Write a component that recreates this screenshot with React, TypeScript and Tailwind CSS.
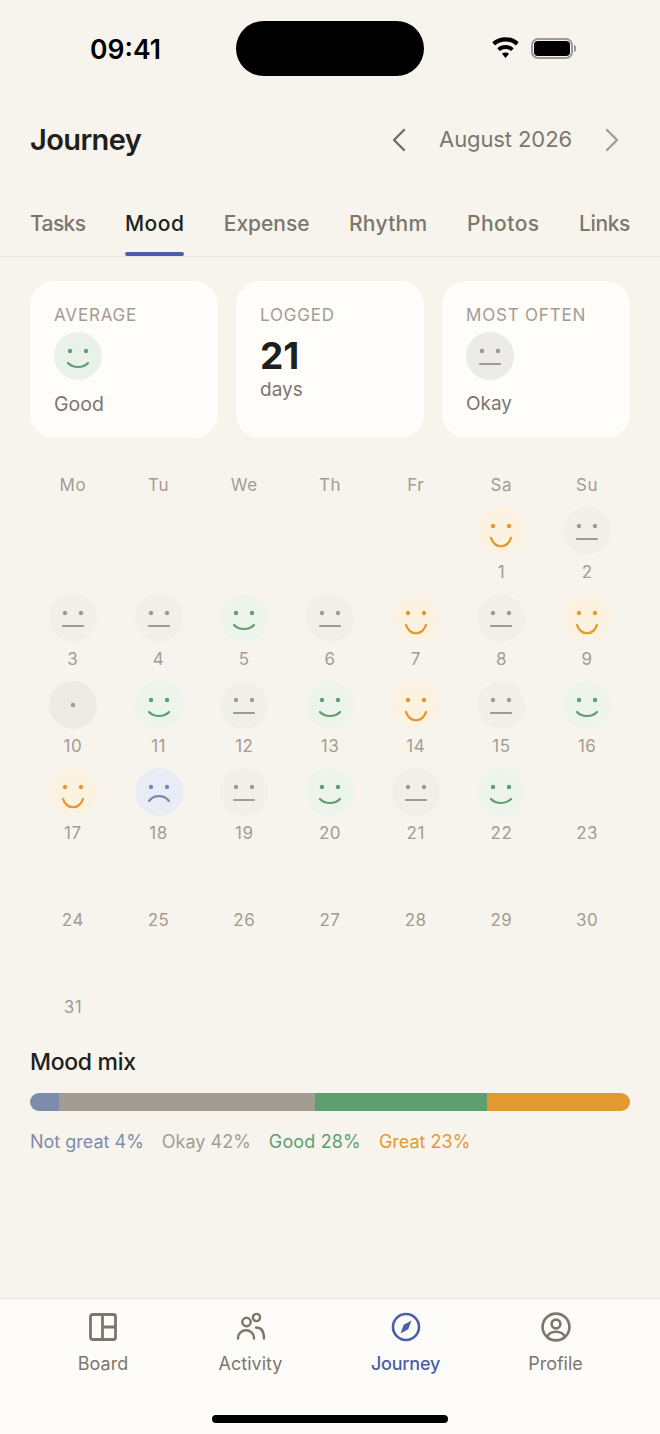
import { ChevronLeft, ChevronRight } from "lucide-react";

type Mood = "great" | "good" | "okay" | "low" | "none" | "dot";

const faceStyles = {
  great: { bg: "bg-[#fcf2e2]", color: "#e29a2f" },
  good: { bg: "bg-[#edf4ec]", color: "#5f9e6e" },
  okay: { bg: "bg-[#f1efea]", color: "#a19a90" },
  low: { bg: "bg-[#e8ecf4]", color: "#7a8aaa" },
  dot: { bg: "bg-[#ecebe6]", color: "#a19a90" },
};

// day -> mood, in calendar order (August starts on Saturday)
const moods: Mood[] = [
  "great", "okay", "okay", "okay", "good", "okay", "great", "okay", "great",
  "dot", "good", "okay", "good", "great", "okay", "good",
  "great", "low", "okay", "good", "okay", "good",
];

// tracking per tab keeps each label at the width it has in the design
const tabs = [
  { label: "Tasks", track: "tracking-[-0.6px]" },
  { label: "Mood", track: "tracking-[0.5px]" },
  { label: "Expense", track: "tracking-[-0.05px]" },
  { label: "Rhythm", track: "tracking-[0.3px]" },
  { label: "Photos", track: "tracking-[0.5px]" },
  { label: "Links", track: "tracking-[-0.4px]" },
];

function Face({ mood, bg }: { mood: Exclude<Mood, "none">; bg?: string }) {
  const s = faceStyles[mood];
  return (
    <div className={`w-12 h-12 rounded-full ${bg ?? s.bg}`}>
      <svg viewBox="0 0 48 48" className="w-12 h-12" fill="none" stroke={s.color} strokeWidth="2.2" strokeLinecap="round">
        {mood === "dot" ? (
          <circle cx="24" cy="24" r="2.2" fill={s.color} stroke="none" />
        ) : (
          <>
            <circle cx="16" cy="19" r="2.2" fill={s.color} stroke="none" />
            <circle cx="32" cy="19" r="2.2" fill={s.color} stroke="none" />
          </>
        )}
        {mood === "great" && <path d="M14 31c4 11 16 11 20 0" />}
        {mood === "good" && <path d="M14 31c5 5.3 15 5.3 20 0" />}
        {mood === "okay" && <path d="M14 32h20" />}
        {mood === "low" && <path d="M14 33c5-6.5 15-6.5 20 0" />}
      </svg>
    </div>
  );
}

function DayCell({ day, mood }: { day: number; mood: Mood }) {
  return (
    <div className="h-[87px] flex flex-col items-center">
      <div className="h-12 w-12">{mood !== "none" && <Face mood={mood} />}</div>
      <span className="mt-[7px] text-[17px] leading-[20px] tracking-[0.5px] text-[#a39c92]">{day}</span>
    </div>
  );
}

function StatCard({ label, children }: { label: string; children: React.ReactNode }) {
  return (
    <div className="h-[157px] rounded-[24px] bg-[#fefdfa] pl-6 pt-[24px]">
      <div className="text-[17px] leading-[20px] tracking-[0.8px] text-[#a39c92]">{label}</div>
      {children}
    </div>
  );
}

export default function App() {
  const days = Array.from({ length: 31 }, (_, i) => i + 1);

  return (
    <div className="w-[660px] h-[1434px] flex flex-col bg-[#f7f4ee] font-['Inter',sans-serif] overflow-hidden">
      {/* status bar */}
      <div className="relative h-[96px] shrink-0">
        <span className="absolute left-[90px] top-[33px] text-[26.5px] leading-[32px] font-semibold text-black">09:41</span>
        <div className="absolute left-[236px] top-[21px] w-[188px] h-[55px] rounded-full bg-black" />
        <svg viewBox="0 0 30 24" className="absolute left-[491px] top-[37px] w-[29px] h-[22px]" fill="black">
          <path d="M15 23l-3.9-4.6a5.6 5.6 0 017.8 0zM8.8 15.4L6 12.2a13.4 13.4 0 0118 0l-2.8 3.2a9.2 9.2 0 00-12.4 0zM3.6 9.2L.6 5.8a21.4 21.4 0 0128.8 0l-3 3.4a17 17 0 00-22.8 0z" />
        </svg>
        <div className="absolute left-[531px] top-[38px] w-[42px] h-[21px] rounded-[7px] border-2 border-[#9a9a9a] p-[1px]">
          <div className="w-full h-full rounded-[4px] bg-black" />
        </div>
        <div className="absolute left-[574px] top-[45px] w-[2px] h-[7px] rounded-r bg-[#9a9a9a]" />
      </div>

      {/* header */}
      <div className="h-[86px] shrink-0 pt-[1px] px-[30px] flex items-center justify-between">
        <h1 className="text-[29px] leading-[36px] font-semibold tracking-[-0.6px] text-[#211f1b]">Journey</h1>
        <div className="flex items-center -mr-[2px]">
          <ChevronLeft size={40} strokeWidth={1.4} className="text-[#6f6a62]" />
          <span className="mx-[20px] text-[22px] tracking-[-0.1px] text-[#7c766d]">August 2026</span>
          <ChevronRight size={40} strokeWidth={1.4} className="text-[#a39c92]" />
        </div>
      </div>

      {/* tabs */}
      <div className="h-[75px] shrink-0 px-[30px] flex justify-between border-b border-[#e8e5df]">
        {tabs.map((t) => (
          <div key={t.label} className="relative pt-[28px]">
            <span className={`text-[21px] leading-[28px] font-medium ${t.track} ${t.label === "Mood" ? "text-[#211f1b]" : "text-[#7c766d]"}`}>{t.label}</span>
            {t.label === "Mood" && <div className="absolute left-0 right-0 bottom-0 h-[4px] rounded-full bg-[#4a5fa8]" />}
          </div>
        ))}
      </div>

      {/* stats */}
      <div className="mt-[24px] px-[30px] grid grid-cols-3 gap-[18px]">
        <StatCard label="AVERAGE">
          <div className="mt-[7px]"><Face mood="good" bg="bg-[#e9f2ea]" /></div>
          <div className="mt-[11px] text-[19.5px] leading-[26px] text-[#7c766d]">Good</div>
        </StatCard>
        <StatCard label="LOGGED">
          <div className="mt-[11px] text-[37px] leading-[40px] font-bold text-[#211f1b]">21</div>
          <div className="mt-[1px] text-[19px] leading-[26px] text-[#7c766d]">days</div>
        </StatCard>
        <StatCard label="MOST OFTEN">
          <div className="mt-[7px]"><Face mood="okay" bg="bg-[#edebe7]" /></div>
          <div className="mt-[11px] text-[19px] leading-[26px] text-[#7c766d]">Okay</div>
        </StatCard>
      </div>

      {/* calendar */}
      <div className="mt-[35px] px-[30px]">
        <div className="grid grid-cols-7 h-[34px]">
          {["Mo", "Tu", "We", "Th", "Fr", "Sa", "Su"].map((d) => (
            <div key={d} className="text-center text-[17px] leading-[24px] tracking-[0.6px] text-[#a39c92]">{d}</div>
          ))}
        </div>
        <div className="grid grid-cols-7">
          <div className="col-span-5" />
          {days.map((d) => (
            <DayCell key={d} day={d} mood={moods[d - 1] ?? "none"} />
          ))}
        </div>
      </div>

      {/* mood mix */}
      <div className="mt-[18px] px-[30px]">
        <h2 className="text-[23px] leading-[30px] font-medium tracking-[-0.3px] text-[#211f1b]">Mood mix</h2>
        <div className="mt-[16px] h-[18px] rounded-full overflow-hidden flex">
          <div className="w-[29px] bg-[#7d8cab]" />
          <div className="w-[256px] bg-[#a39c92]" />
          <div className="w-[172px] bg-[#5f9e6e]" />
          <div className="flex-1 bg-[#e29a2f]" />
        </div>
        <div className="mt-[19px] flex gap-[18px] text-[18px] leading-[24px]">
          <span className="text-[#7d8cab]">Not great 4%</span>
          <span className="text-[#a39c92]">Okay 42%</span>
          <span className="tracking-[0.15px] text-[#5f9e6e]">Good 28%</span>
          <span className="text-[#e29a2f]">Great 23%</span>
        </div>
      </div>

      <div className="flex-1" />

      {/* bottom nav */}
      <div className="relative h-[136px] shrink-0 bg-[#fdfcf8] border-t border-[#e8e5df]">
        <div className="absolute left-[77px] top-[13px] w-[52px] flex flex-col items-center">
          <svg viewBox="0 0 30 30" className="w-[30px] h-[30px]" fill="none" stroke="#7c766d" strokeWidth="2.8" strokeLinejoin="round">
            <rect x="2.5" y="2.5" width="25" height="25" rx="2" />
            <path d="M14.5 2.5v25M14.5 15h13" />
          </svg>
          <span className="mt-[9px] text-[18px] leading-[26px] text-[#7c766d]">Board</span>
        </div>
        <div className="absolute left-[218px] top-[13px] w-[65px] flex flex-col items-center">
          <svg viewBox="0 0 30 30" className="w-[30px] h-[30px]" fill="none" stroke="#7c766d" strokeWidth="2.4" strokeLinecap="round">
            <circle cx="10.5" cy="10" r="4.2" />
            <circle cx="20.5" cy="5.5" r="3.6" />
            <path d="M2 26.5c0-11 16-11 16 0M20 15.5c5 0 8 4 8 11" />
          </svg>
          <span className="mt-[9px] text-[18px] leading-[26px] text-[#7c766d]">Activity</span>
        </div>
        <div className="absolute left-[372px] top-[13px] w-[67px] flex flex-col items-center">
          <svg viewBox="0 0 30 30" className="w-[30px] h-[30px]" fill="none" stroke="#4a5fa8" strokeWidth="2.6">
            <circle cx="15" cy="15" r="13" />
            <path d="M20.5 8.5l-3.2 8.8-7.8 4.2 3.2-8.8z" fill="#4a5fa8" stroke="none" />
          </svg>
          <span className="mt-[9px] text-[18px] leading-[26px] font-medium tracking-[-0.2px] text-[#4a5fa8]">Journey</span>
        </div>
        <div className="absolute left-[528px] top-[13px] w-[55px] flex flex-col items-center">
          <svg viewBox="0 0 30 30" className="w-[30px] h-[30px]" fill="none" stroke="#7c766d" strokeWidth="2.6">
            <circle cx="15" cy="15" r="13.4" />
            <circle cx="15" cy="12" r="4.4" />
            <path d="M6 25c3-7 15-7 18 0" />
          </svg>
          <span className="mt-[9px] text-[18px] leading-[26px] text-[#7c766d]">Profile</span>
        </div>
        <div className="absolute left-[212px] top-[116px] w-[236px] h-[8px] rounded-full bg-black" />
      </div>
    </div>
  );
}
